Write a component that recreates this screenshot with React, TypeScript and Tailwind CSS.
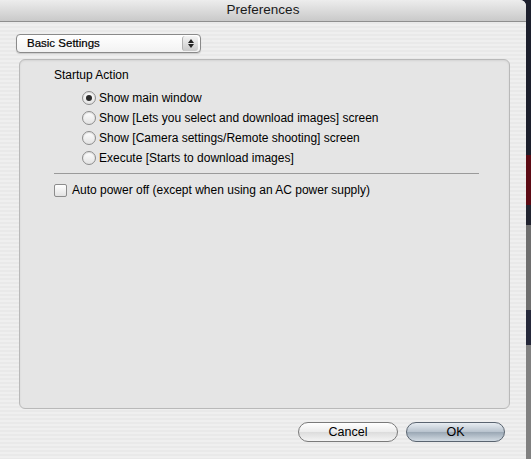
import React from "react";

const startupOptions = [
    "Show main window",
    "Show [Lets you select and download images] screen",
    "Show [Camera settings/Remote shooting] screen",
    "Execute [Starts to download images]",
];

const Radio = ({ checked }: { checked: boolean }) => (
    <span className="relative flex h-[14px] w-[14px] shrink-0 items-center justify-center rounded-full border border-[#8c8c8c] bg-[linear-gradient(#ffffff,#e2e2e2)] shadow-[inset_0_1px_1px_rgba(0,0,0,0.15)]">
        {checked && <span className="h-[6px] w-[6px] rounded-full bg-[#2a2a2a]" />}
    </span>
);

const App = () => {
    return (
        <div className="flex h-[459px] w-[531px] overflow-hidden bg-[#1d2030] font-['Liberation_Sans',Arial,sans-serif] text-[12px] text-black">
            <div className="flex w-[526px] flex-col overflow-hidden rounded-tr-[6px] bg-[repeating-linear-gradient(#efefef_0px,#efefef_2px,#e9e9e9_2px,#e9e9e9_4px)]">
                {/* title bar */}
                <div className="flex h-[22px] shrink-0 items-center justify-center border-b border-[#8e8e8e] bg-[linear-gradient(#ededed,#c9c9c9)] text-[13.5px] text-[#1a1a1a]">
                    Preferences
                </div>

                <div className="flex flex-1 flex-col pl-[16px] pt-[12px]">
                    {/* settings popup */}
                    <div className="flex h-[19px] w-[185px] items-center justify-between rounded-[4px] border border-[#8a8a8a] bg-[linear-gradient(#ffffff,#f2f2f2)] pl-[10px] pr-[2px] text-[11.5px] shadow-[0_1px_1px_rgba(0,0,0,0.15)]">
                        <span className="[-webkit-text-stroke:0.2px_black]">Basic Settings</span>
                        <span className="flex h-[15px] w-[16px] flex-col items-center justify-center gap-[1px] rounded-[3px] border-l border-[#b0b0b0] bg-[linear-gradient(#f4f4f4,#c9c9c9)]">
                            <svg width="6" height="4" viewBox="0 0 6 4">
                                <path d="M3 0 L6 4 L0 4 Z" fill="#222" />
                            </svg>
                            <svg width="6" height="4" viewBox="0 0 6 4">
                                <path d="M0 0 L6 0 L3 4 Z" fill="#222" />
                            </svg>
                        </span>
                    </div>

                    {/* group box */}
                    <div className="ml-[3px] mt-[6px] flex h-[350px] w-[491px] flex-col rounded-[6px] border border-[#b9b9b9] bg-[#e5e5e5] pl-[34px] pt-[8px] shadow-[inset_0_1px_2px_rgba(0,0,0,0.08)]">
                        <div className="leading-[15px]">Startup Action</div>
                        <div className="ml-[28px] mt-[5px] flex flex-col">
                            {startupOptions.map((opt, i) => (
                                <div key={opt} className="flex h-[20px] items-center gap-[3px]">
                                    <Radio checked={i === 0} />
                                    <span>{opt}</span>
                                </div>
                            ))}
                        </div>
                        <div className="mt-[5px] h-px w-[425px] bg-[#9a9a9a]" />
                        <div className="mt-[7px] flex items-center gap-[5px]">
                            <span className="h-[13px] w-[13px] rounded-[2px] border border-[#8c8c8c] bg-[linear-gradient(#ffffff,#e2e2e2)]" />
                            <span>Auto power off (except when using an AC power supply)</span>
                        </div>
                    </div>

                    {/* buttons */}
                    <div className="mt-[13px] flex w-[489px] justify-end gap-[8px]">
                        <button className="flex h-[20px] w-[100px] items-center justify-center rounded-full border border-[#7a7a7a] bg-[linear-gradient(#ffffff,#ececec_50%,#dcdcdc_51%,#f4f4f4)] text-[12.5px]">
                            Cancel
                        </button>
                        <button className="flex h-[20px] w-[99px] items-center justify-center rounded-full border border-[#5a6470] bg-[linear-gradient(#e8edf2,#b7c2cd_50%,#9aa7b4_51%,#d2dbe3)] text-[12.5px]">
                            OK
                        </button>
                    </div>
                </div>
            </div>

            {/* desktop behind the window */}
            <div className="flex w-[5px] flex-col">
                <div className="h-[155px] bg-[#1c1f2c]" />
                <div className="h-[50px] bg-[#5c0a14]" />
                <div className="h-[20px] bg-[#222430]" />
                <div className="h-[85px] bg-[#6e6e6e]" />
                <div className="h-[35px] bg-[#25283a]" />
                <div className="flex-1 bg-[#808080]" />
            </div>
        </div>
    );
};

export default App;
